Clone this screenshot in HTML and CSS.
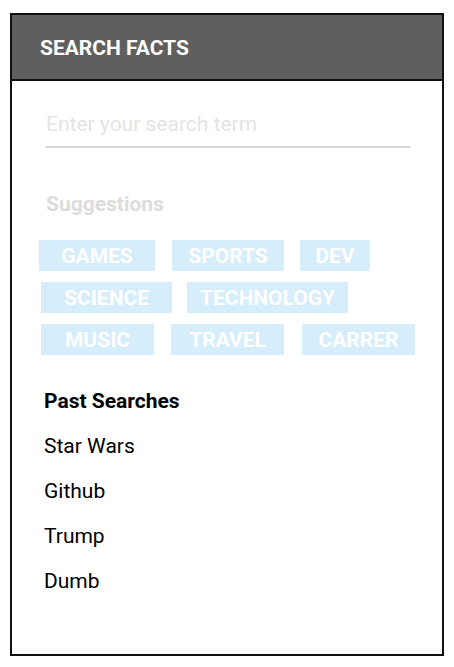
FILE: index.html
```html
<!DOCTYPE html>
<html>
<head>
<meta charset="utf-8">
<link rel="stylesheet" href="styles.css">
</head>
<body>
<div class="panel">
  <div class="panel-header">SEARCH FACTS</div>
  <div class="panel-body">
    <div class="search-input">Enter your search term</div>
    <div class="suggest-title">Suggestions</div>
    <div class="chips chips--first">
      <span class="chip chip--games">GAMES</span>
      <span class="chip chip--sports">SPORTS</span>
      <span class="chip chip--dev">DEV</span>
    </div>
    <div class="chips">
      <span class="chip chip--science">SCIENCE</span>
      <span class="chip chip--technology">TECHNOLOGY</span>
    </div>
    <div class="chips">
      <span class="chip chip--music">MUSIC</span>
      <span class="chip chip--travel">TRAVEL</span>
      <span class="chip chip--carrer">CARRER</span>
    </div>
    <div class="past-title">Past Searches</div>
    <ul class="past-list">
      <li>Star Wars</li>
      <li>Github</li>
      <li>Trump</li>
      <li>Dumb</li>
    </ul>
  </div>
</div>
</body>
</html>
```

FILE: styles.css
```css
html, body {
  margin: 0;
  padding: 0;
  background: #ffffff;
}
body {
  font-family: Roboto, "Liberation Sans", sans-serif;
  padding: 13px 10px 11px;
}
.panel {
  box-sizing: border-box;
  width: 434px;
  height: 643px;
  border: 2px solid #111111;
  display: flex;
  flex-direction: column;
}
.panel-header {
  background: #5f5f5f;
  color: #ffffff;
  font-weight: 700;
  font-size: 21px;
  line-height: 24px;
  padding: 21px 28px 19px;
  border-bottom: 2px solid #111111;
}
.panel-body {
  padding: 31px 32px 0 34px;
}
.search-input {
  font-size: 21px;
  line-height: 24px;
  color: #e4e4e4;
  padding-bottom: 10px;
  border-bottom: 2px solid #d6d6d6;
}
.suggest-title {
  margin-top: 44px;
  font-size: 21px;
  line-height: 24px;
  font-weight: 700;
  color: #dcdcdc;
}
.chips {
  display: flex;
  gap: 17px;
  margin-left: -5px;
  margin-top: 11px;
}
.chips--first {
  margin-top: 24px;
  margin-left: -7px;
}
.chip {
  box-sizing: border-box;
  flex-shrink: 0;
  background: #d6edfc;
  color: #ffffff;
  font-weight: 700;
  font-size: 21px;
  line-height: 30px;
  padding-top: 1px;
  text-align: center;
}
.chip--games { width: 116px; }
.chip--sports { width: 112px; }
.chip--dev { width: 70px; margin-left: -1px; }
.chip--science { width: 131px; }
.chip--technology { width: 161px; margin-left: -2px; }
.chip--music { width: 113px; }
.chip--travel { width: 113px; }
.chip--carrer { width: 113px; margin-left: 1px; }
.past-title {
  margin-top: 34px;
  margin-left: -2px;
  font-size: 21px;
  line-height: 24px;
  font-weight: 700;
  color: #000000;
}
.past-list {
  list-style: none;
  margin: 0;
  padding: 0;
  margin-left: -2px;
}
.past-list li {
  font-size: 21px;
  line-height: 24px;
  color: #000000;
  margin-top: 21px;
}
```
